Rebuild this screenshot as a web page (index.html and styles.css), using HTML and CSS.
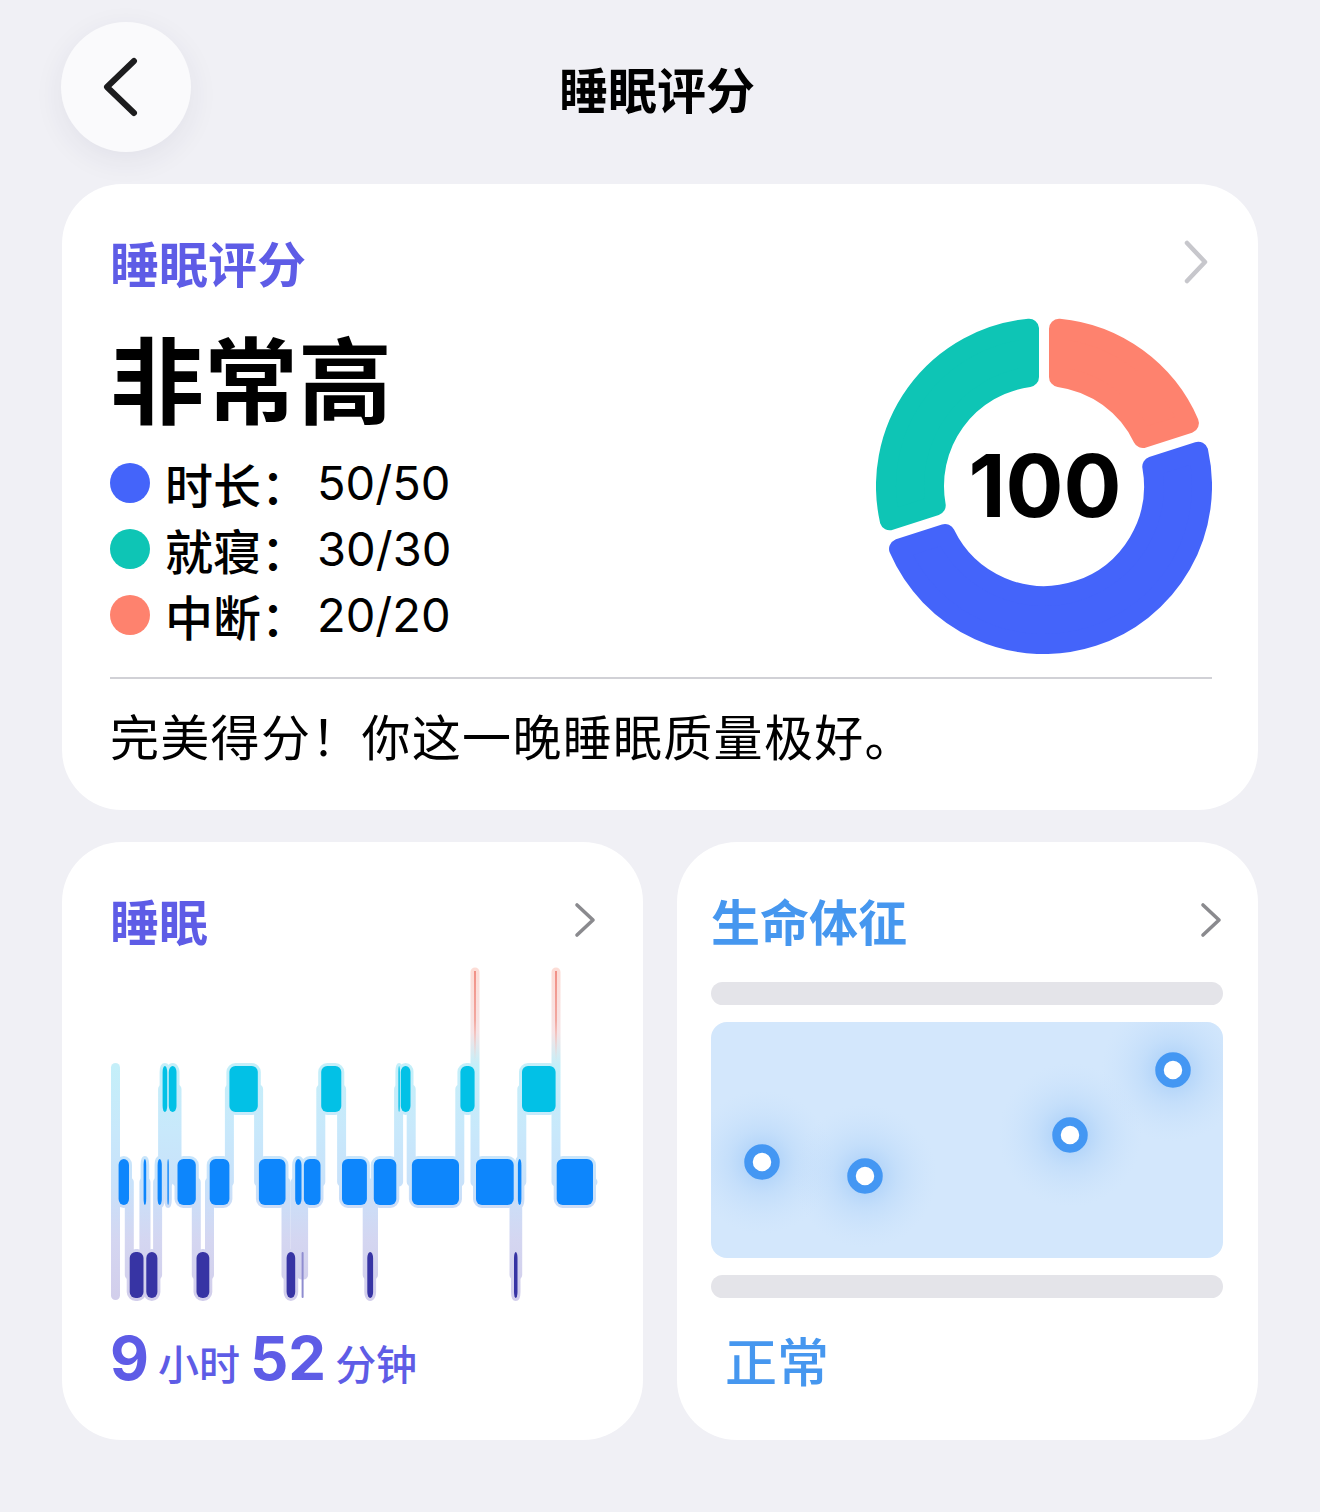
FILE: index.html
```html
<!DOCTYPE html>
<html lang="zh-CN">
<head>
<meta charset="utf-8">
<title>睡眠评分</title>
<link rel="stylesheet" href="styles.css">
</head>
<body>
<div class="page">
  <header class="topbar">
    <button class="back" type="button" aria-label="返回">
      <svg class="back-icon" viewBox="0 0 40 60" width="40" height="60">
        <polyline points="33,4 6,30 33,56" />
      </svg>
    </button>
    <h1 class="title">睡眠评分</h1>
    <span class="topbar-spacer"></span>
  </header>

  <section class="card score-card">
    <div class="card-head">
      <h2 class="card-title purple">睡眠评分</h2>
      <svg class="chev chev-light" viewBox="0 0 24 44" width="24" height="44">
        <polyline points="3,3 21,22 3,41" />
      </svg>
    </div>

    <div class="score-body">
      <div class="score-left">
        <div class="level">非常高</div>
        <ul class="legend">
          <li><span class="dot dot-blue"></span><span class="label">时长：</span><span class="val">50/50</span></li>
          <li><span class="dot dot-teal"></span><span class="label">就寝：</span><span class="val">30/30</span></li>
          <li><span class="dot dot-coral"></span><span class="label">中断：</span><span class="val">20/20</span></li>
        </ul>
      </div>

      <div class="donut">
        <svg class="donut-ring" viewBox="-168 -168 336 336" width="336" height="336">
          <!-- 中断 20 -->
          <path class="seg seg-coral" d="M15 -157.29 A158 158 0 0 1 144.95 -62.88 L99 -47.94 A110 110 0 0 0 15 -108.97 Z" />
          <!-- 时长 50 -->
          <path class="seg seg-blue" d="M154.23 -34.34 A158 158 0 0 1 -144.95 62.88 L-99 47.94 A110 110 0 0 0 108.28 -19.4 Z" />
          <!-- 就寝 30 -->
          <path class="seg seg-teal" d="M-154.23 34.34 A158 158 0 0 1 -15 -157.29 L-15 -108.97 A110 110 0 0 0 -108.28 19.4 Z" />
        </svg>
        <div class="donut-score">100</div>
      </div>
    </div>

    <div class="rule"></div>
    <p class="summary">完美得分！你这一晚睡眠质量极好。</p>
  </section>

  <div class="tiles">
    <section class="card tile sleep-tile">
      <div class="card-head">
        <h2 class="card-title purple">睡眠</h2>
        <svg class="chev chev-dark" viewBox="0 0 22 36" width="22" height="36">
          <polyline points="3,3 19,18 3,33" />
        </svg>
      </div>

      <svg class="hypno" viewBox="110 965 485 340" width="485" height="340">
        <defs>
          <linearGradient id="haloGrad" gradientUnits="userSpaceOnUse" x1="0" y1="965" x2="0" y2="1300">
            <stop offset="0" stop-color="#fddcd5" />
            <stop offset="0.2" stop-color="#f6e4e6" />
            <stop offset="0.3" stop-color="#c4eff9" />
            <stop offset="0.5" stop-color="#c8e8fb" />
            <stop offset="0.66" stop-color="#c8e1fa" />
            <stop offset="0.82" stop-color="#d4d6f1" />
            <stop offset="1" stop-color="#d2ceeb" />
          </linearGradient>
          <linearGradient id="awakeGrad" gradientUnits="userSpaceOnUse" x1="0" y1="970" x2="0" y2="1062">
            <stop offset="0" stop-color="#ee7d72" />
            <stop offset="0.55" stop-color="#f19a90" />
            <stop offset="1" stop-color="#f6c9c4" stop-opacity="0" />
          </linearGradient>

          <g id="stRem">
            <rect x="162.6" y="1066" width="4.6" height="46" rx="6" />
            <rect x="168.8" y="1066" width="7.7" height="46" rx="6" />
            <rect x="229.4" y="1066" width="28.4" height="46" rx="6" />
            <rect x="321.2" y="1066" width="20.1" height="46" rx="6" />
            <rect x="398.4" y="1066" width="1.4" height="46" rx="6" />
            <rect x="400.8" y="1066" width="9.7" height="46" rx="6" />
            <rect x="460.4" y="1066" width="14.2" height="46" rx="6" />
            <rect x="522" y="1066" width="33.6" height="46" rx="6" />
          </g>
          <g id="stCore">
            <rect x="118.6" y="1159" width="10.4" height="46" rx="6" />
            <rect x="143.6" y="1159" width="2.6" height="46" rx="6" />
            <rect x="157.6" y="1159" width="4.2" height="46" rx="6" />
            <rect x="167.4" y="1159" width="1.4" height="46" rx="6" />
            <rect x="177.5" y="1159" width="18.3" height="46" rx="6" />
            <rect x="209.7" y="1159" width="19.7" height="46" rx="6" />
            <rect x="258.9" y="1159" width="26.6" height="46" rx="6" />
            <rect x="295.2" y="1159" width="6.3" height="46" rx="6" />
            <rect x="303.9" y="1159" width="16.6" height="46" rx="6" />
            <rect x="342" y="1159" width="24.9" height="46" rx="6" />
            <rect x="373.8" y="1159" width="22.5" height="46" rx="6" />
            <rect x="411.9" y="1159" width="47.1" height="46" rx="6" />
            <rect x="476" y="1159" width="37.7" height="46" rx="6" />
            <rect x="517.9" y="1159" width="3.5" height="46" rx="6" />
            <rect x="556.7" y="1159" width="36.3" height="46" rx="6" />
          </g>
          <g id="stDeep">
            <rect x="129.7" y="1252" width="13.8" height="46" rx="6" />
            <rect x="146.3" y="1252" width="11.1" height="46" rx="6" />
            <rect x="196.5" y="1252" width="12.8" height="46" rx="6" />
            <rect x="286.6" y="1252" width="8.6" height="46" rx="6" />
            <rect x="367.3" y="1252" width="5.8" height="46" rx="6" />
            <rect x="514" y="1252" width="3.5" height="46" rx="6" />
          </g>
        </defs>

        <!-- light track behind the stages -->
        <g class="halo">
          <rect class="halo-start" x="111" y="1063" width="9" height="237" rx="4.5" />
          <path class="halo-path" d="M118.6 1182 H129.3 V1275 H143.9 V1182 H146 V1275 H157.6 V1182 H162.6 V1089 H167.4 V1182 H168.6 V1089 H177 V1182 H196.3 V1275 H209.5 V1182 H229.4 V1089 H258.6 V1182 H286 V1275 H295.2 V1182 H301.8 V1275 H303.6 V1182 H320.8 V1089 H341.6 V1182 H367.2 V1275 H373.5 V1182 H398.6 V1089 H411.2 V1182 H459.8 V1089 H475 V972 V1182 H514 V1275 H517.7 V1182 H521.8 V1089 H556 V972 V1182 H593" />
          <use href="#stRem" />
          <use href="#stCore" />
          <use href="#stDeep" />
        </g>

        <!-- stage blocks -->
        <use class="fill-rem" href="#stRem" />
        <use class="fill-core" href="#stCore" />
        <use class="fill-deep" href="#stDeep" />
        <rect class="deep-thin" x="301.6" y="1252" width="2" height="46" rx="1" />

        <!-- awake marks -->
        <line class="awake" x1="475" y1="971" x2="475" y2="1062" />
        <line class="awake" x1="556" y1="971" x2="556" y2="1062" />
      </svg>

      <p class="duration">
        <span class="num">9</span><span class="unit">小时</span><span class="num">52</span><span class="unit">分钟</span>
      </p>
    </section>

    <section class="card tile vitals-tile">
      <div class="card-head">
        <h2 class="card-title blue">生命体征</h2>
        <svg class="chev chev-dark" viewBox="0 0 22 36" width="22" height="36">
          <polyline points="3,3 19,18 3,33" />
        </svg>
      </div>

      <div class="bar bar-top"></div>

      <svg class="vitals-plot" viewBox="0 0 512 236" width="512" height="236">
        <defs>
          <radialGradient id="glow">
            <stop offset="0" stop-color="#8fc0f7" stop-opacity="0.75" />
            <stop offset="0.45" stop-color="#a9cff8" stop-opacity="0.35" />
            <stop offset="1" stop-color="#c4defb" stop-opacity="0" />
          </radialGradient>
          <clipPath id="panelClip">
            <rect width="512" height="236" rx="16" />
          </clipPath>
        </defs>
        <rect class="panel" width="512" height="236" rx="16" />
        <g clip-path="url(#panelClip)">
          <circle cx="51" cy="140" r="72" fill="url(#glow)" />
          <circle cx="154" cy="154" r="72" fill="url(#glow)" />
          <circle cx="359" cy="113" r="72" fill="url(#glow)" />
          <circle cx="462" cy="48" r="72" fill="url(#glow)" />
        </g>
        <circle class="pt" cx="51" cy="140" r="13.5" />
        <circle class="pt" cx="154" cy="154" r="13.5" />
        <circle class="pt" cx="359" cy="113" r="13.5" />
        <circle class="pt" cx="462" cy="48" r="13.5" />
      </svg>

      <div class="bar bar-bottom"></div>

      <p class="status">正常</p>
    </section>
  </div>
</div>
</body>
</html>
```

FILE: styles.css
```css
* {
  box-sizing: border-box;
  margin: 0;
  padding: 0;
}

html, body {
  width: 1320px;
  height: 1512px;
}

body {
  background: #f0f0f5;
  font-family: "Noto Sans CJK SC", "Noto Sans", sans-serif;
  color: #000;
  overflow: hidden;
}

.page {
  padding: 22px 62px 0;
}

/* ---------- top bar ---------- */
.topbar {
  display: grid;
  grid-template-columns: 130px 1fr 130px;
  align-items: center;
  height: 130px;
}

.back {
  width: 130px;
  height: 130px;
  border: 0;
  border-radius: 50%;
  background: #fafafc;
  box-shadow: 0 8px 30px rgba(40, 40, 80, 0.07);
  display: flex;
  align-items: center;
  justify-content: center;
  padding-right: 10px;
  margin-left: -1px;
}

.back-icon polyline {
  fill: none;
  stroke: #1c1c1e;
  stroke-width: 6;
  stroke-linecap: round;
  stroke-linejoin: round;
}

.title {
  text-align: center;
  font-size: 49px;
  font-weight: 700;
  line-height: 1;
  margin-right: 6px;
}

/* ---------- cards ---------- */
.card {
  background: #fff;
  border-radius: 60px;
}

.card-head {
  display: flex;
  justify-content: space-between;
  align-items: center;
  height: 60px;
}

.card-title {
  font-size: 49px;
  font-weight: 600;
  line-height: 60px;
}

.purple { color: #5e5ce6; }
.blue { color: #4697ef; }

.chev polyline {
  fill: none;
  stroke-linecap: round;
  stroke-linejoin: round;
}

.chev-light polyline {
  stroke: #c7c7cc;
  stroke-width: 4.5;
}

.chev-dark polyline {
  stroke: #8a8a8e;
  stroke-width: 3.6;
}

/* ---------- score card ---------- */
.score-card {
  margin-top: 32px;
  padding: 48px 46px 43px 48px;
}

.score-card .chev {
  margin-right: 4px;
}

.score-body {
  display: flex;
  justify-content: space-between;
  align-items: flex-start;
  margin-top: 26px;
}

.score-left {
  padding-top: 4px;
}

.level {
  font-size: 94px;
  font-weight: 700;
  line-height: 108px;
}

.legend {
  list-style: none;
  margin-top: 20px;
}

.legend li {
  display: flex;
  align-items: center;
  height: 66px;
}

.dot {
  width: 40px;
  height: 40px;
  border-radius: 50%;
  margin-right: 15px;
  flex: none;
}

.dot-blue { background: #4464fa; }
.dot-teal { background: #0ec5b5; }
.dot-coral { background: #fe826e; }

.label {
  font-size: 48px;
  font-weight: 500;
  line-height: 66px;
}

.val {
  font-family: "Inter", "Noto Sans", sans-serif;
  font-size: 47px;
  font-weight: 400;
  line-height: 66px;
  margin-left: 8px;
}

.donut {
  display: grid;
  width: 336px;
  height: 336px;
}

.donut > * {
  grid-area: 1 / 1;
}

.seg {
  stroke-width: 20;
  stroke-linejoin: round;
}

.seg-blue { fill: #4464fa; stroke: #4464fa; }
.seg-teal { fill: #0ec5b5; stroke: #0ec5b5; }
.seg-coral { fill: #fe826e; stroke: #fe826e; }

.donut-score {
  align-self: center;
  justify-self: center;
  font-family: "Inter", "Noto Sans", sans-serif;
  font-size: 86px;
  font-weight: 700;
  letter-spacing: 0;
  line-height: 1;
  margin-left: 2px;
}

.rule {
  height: 2px;
  background: #d1d1d6;
  margin-top: 23px;
}

.summary {
  margin-top: 24px;
  font-size: 49px;
  font-weight: 400;
  line-height: 64px;
  letter-spacing: 1.3px;
}

/* ---------- bottom tiles ---------- */
.tiles {
  display: grid;
  grid-template-columns: 581px 581px;
  gap: 34px;
  margin-top: 32px;
}

.tile {
  height: 598px;
}

.sleep-tile {
  padding: 48px 47px 0 48px;
}

.hypno {
  display: block;
  margin-top: 15px;
  overflow: visible;
}

.halo {
  fill: url(#haloGrad);
  stroke: url(#haloGrad);
  stroke-width: 6;
  stroke-linejoin: round;
  stroke-linecap: round;
}

.halo .halo-path {
  fill: none;
  stroke-width: 9;
}

.halo .halo-start {
  stroke: none;
}

.fill-rem { fill: #02c1e6; }
.fill-core { fill: #0d86fc; }
.fill-deep { fill: #3734a4; }
.deep-thin { fill: #8f8dd0; }

.awake {
  stroke: url(#awakeGrad);
  stroke-width: 1.6;
}

.duration {
  margin-top: 17px;
  color: #5e5ce6;
  display: flex;
  align-items: baseline;
  line-height: 72px;
  white-space: nowrap;
}

.duration .num {
  font-family: "Inter", "Noto Sans", sans-serif;
  font-size: 60px;
  font-weight: 700;
}

.duration .unit {
  font-size: 41px;
  font-weight: 500;
  margin: 0 10px 0 9px;
}

.vitals-tile {
  padding: 48px 35px 0 34px;
}

.vitals-tile .chev {
  margin-right: 1px;
}

.bar {
  height: 23px;
  border-radius: 12px;
  background: #e4e4e9;
}

.bar-top {
  margin-top: 32px;
}

.vitals-plot {
  display: block;
  margin-top: 17px;
}

.panel {
  fill: #d3e7fc;
}

.pt {
  fill: #fff;
  stroke: #4497f3;
  stroke-width: 8.5;
}

.bar-bottom {
  margin-top: 17px;
}

.status {
  margin-top: 27px;
  margin-left: 14px;
  font-size: 52px;
  font-weight: 500;
  line-height: 70px;
  color: #4697ef;
}
```
